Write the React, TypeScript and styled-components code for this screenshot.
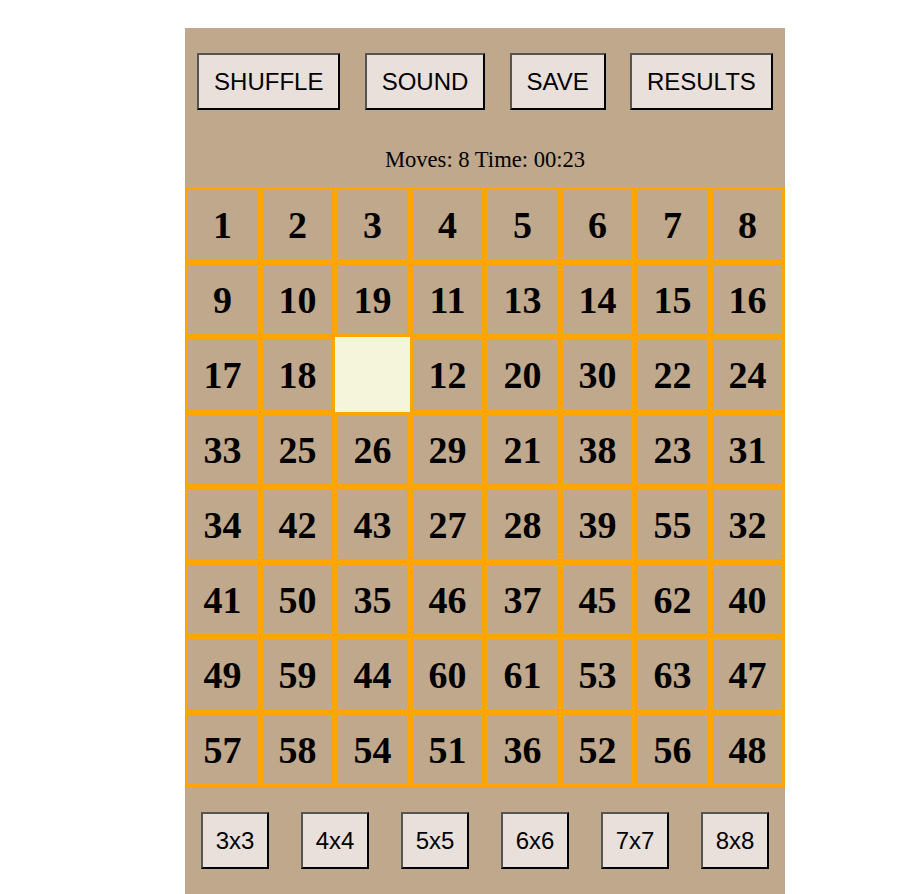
import React, { useState } from "react";
import styled, { createGlobalStyle } from "styled-components";

const GlobalStyle = createGlobalStyle`
  body {
    margin: 0;
    background: #ffffff;
  }
`;

const tiles = [
  1, 2, 3, 4, 5, 6, 7, 8,
  9, 10, 19, 11, 13, 14, 15, 16,
  17, 18, 0, 12, 20, 30, 22, 24,
  33, 25, 26, 29, 21, 38, 23, 31,
  34, 42, 43, 27, 28, 39, 55, 32,
  41, 50, 35, 46, 37, 45, 62, 40,
  49, 59, 44, 60, 61, 53, 63, 47,
  57, 58, 54, 51, 36, 52, 56, 48,
];

const controls = ["SHUFFLE", "SOUND", "SAVE", "RESULTS"];
const sizes = ["3x3", "4x4", "5x5", "6x6", "7x7", "8x8"];

const App = () => {
  const [size, setSize] = useState<string>("8x8");

  return (
    <PageSC>
      <GlobalStyle />
      <GameSC>
        <ToolbarSC>
          {controls.map((label) => (
            <ButtonSC key={label}>{label}</ButtonSC>
          ))}
        </ToolbarSC>
        <StatusSC>Moves: 8 Time: 00:23</StatusSC>
        <BoardSC>
          {tiles.map((n, i) => (
            <TileSC key={i} $empty={n === 0}>
              {n === 0 ? "" : n}
            </TileSC>
          ))}
        </BoardSC>
        <SizesSC>
          {sizes.map((s) => (
            <SizeButtonSC key={s} onClick={() => setSize(s)} data-active={s === size}>
              {s}
            </SizeButtonSC>
          ))}
        </SizesSC>
      </GameSC>
    </PageSC>
  );
};

const PageSC = styled.div`
  padding: 28px 0 0 185px;
`;

const GameSC = styled.div`
  width: 600px;
  background-color: #bfa88c;
`;

const ToolbarSC = styled.div`
  display: flex;
  justify-content: space-around;
  padding-top: 25px;
`;

const ButtonSC = styled.button`
  height: 57px;
  padding: 0 15px;
  font-family: "Liberation Sans", Arial, sans-serif;
  font-size: 24px;
  color: #000;
  background-color: #e9dfdb;
  border-style: solid;
  border-width: 2px;
  border-color: #555555 #000000 #000000 #555555;
  cursor: pointer;
`;

const StatusSC = styled.div`
  height: 77px;
  display: flex;
  align-items: center;
  justify-content: center;
  padding-top: 23px;
  box-sizing: border-box;
  font-family: "Liberation Serif", "Times New Roman", serif;
  font-size: 22.6px;
  color: #000;
`;

const BoardSC = styled.div`
  display: grid;
  grid-template-columns: repeat(8, 75px);
  grid-auto-rows: 75px;
`;

const TileSC = styled.div<{ $empty: boolean }>`
  box-sizing: border-box;
  display: flex;
  align-items: center;
  justify-content: center;
  border: ${(p) => (p.$empty ? "none" : "3px solid #ffa500")};
  background-color: ${(p) => (p.$empty ? "#f5f5dc" : "#bfa88c")};
  font-family: "Liberation Serif", "Times New Roman", serif;
  font-weight: bold;
  font-size: 38px;
  color: #000;
`;

const SizesSC = styled.div`
  display: flex;
  justify-content: space-around;
  padding: 25px 0;
`;

const SizeButtonSC = styled(ButtonSC)`
  width: 68px;
  padding: 0;
`;

export default React.memo(App);
